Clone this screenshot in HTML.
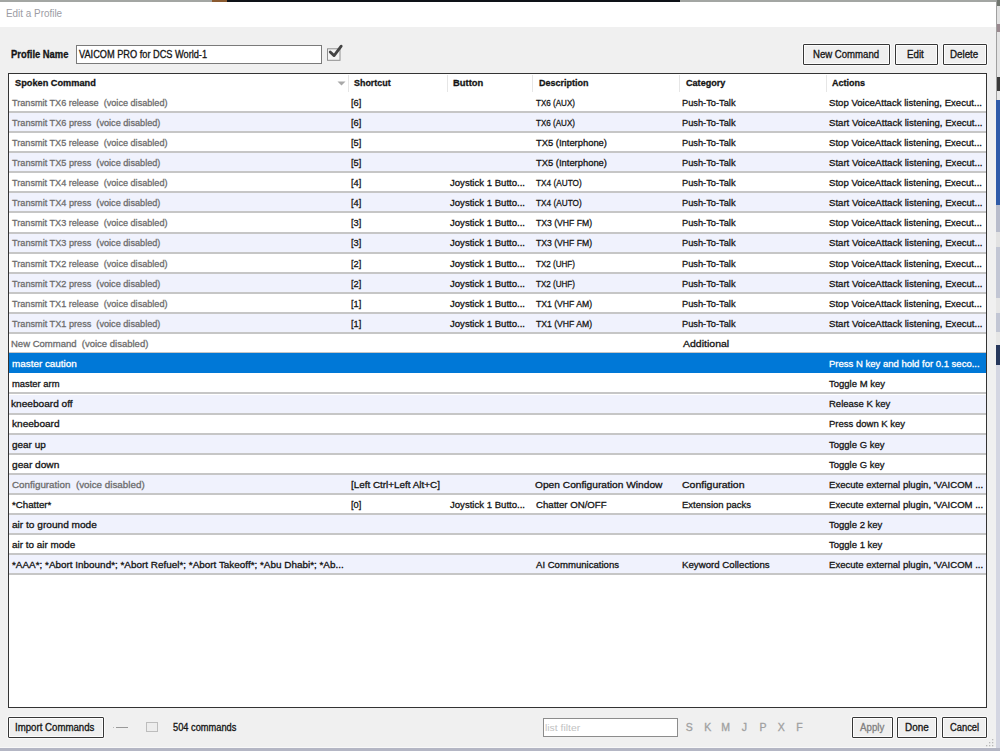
<!DOCTYPE html>
<html><head><meta charset="utf-8">
<style>
*{margin:0;padding:0;box-sizing:border-box}
html,body{width:1000px;height:751px;overflow:hidden;background:#c9cbd8;font-family:"Liberation Sans",sans-serif;font-size:10px;color:#000}
.abs{position:absolute}
.tx{position:absolute;white-space:nowrap;transform-origin:0 0;color:#141414;-webkit-text-stroke:0.3px;z-index:5}
#win{position:absolute;left:0;top:2px;width:996px;height:745px;background:#f0f0f0}
#title{position:absolute;left:0;top:0;width:996px;height:25px;background:#fff}
.btn{position:absolute;background:#efefef;border:1px solid #363636;border-radius:1px;box-shadow:inset 0 0 0 1px #fcfcfc,0 0 0 1px #fafafa}
#table{position:absolute;left:8px;top:73px;width:979px;height:635px;background:#fff;border:1px solid #333}
.hsep{position:absolute;top:75px;width:1px;height:17px;background:#e6e6e6}
.r{position:absolute;left:9px;width:977px;height:18px}
.r::after{content:"";position:absolute;left:0;right:0;top:18px;height:2px;background:#c6c6c6}
.alt{background:#f0f2fd}
.sel{background:#0078d7;margin-top:-1.6px;height:19.9px;z-index:2}
.sel::after{display:none}
</style></head><body>
<!-- desktop strips -->
<div class="abs" style="left:0;top:0;width:1000px;height:2px;background:#a3a6a3"></div>
<div class="abs" style="left:212px;top:0;width:15px;height:2px;background:#8a5a30"></div>
<div class="abs" style="left:227px;top:0;width:453px;height:2px;background:#0e1218"></div>
<div class="abs" style="left:996px;top:0px;width:4px;height:6px;background:#70756f"></div>
<div class="abs" style="left:996px;top:6px;width:4px;height:18px;background:#e2e2e2"></div>
<div class="abs" style="left:996px;top:24px;width:4px;height:8px;background:#9a8a90"></div>
<div class="abs" style="left:996px;top:32px;width:4px;height:45px;background:#e4e4e4"></div>
<div class="abs" style="left:996px;top:77px;width:4px;height:14px;background:#3a3a3a"></div>
<div class="abs" style="left:996px;top:91px;width:4px;height:9px;background:#e8e8e8"></div>
<div class="abs" style="left:996px;top:100px;width:4px;height:105px;background:#2f5ba8"></div>
<div class="abs" style="left:996px;top:205px;width:4px;height:27px;background:#b8bccb"></div>
<div class="abs" style="left:996px;top:232px;width:4px;height:15px;background:#e2e2e2"></div>
<div class="abs" style="left:996px;top:247px;width:4px;height:51px;background:#c2c6d4"></div>
<div class="abs" style="left:996px;top:298px;width:4px;height:15px;background:#e6e6e6"></div>
<div class="abs" style="left:996px;top:313px;width:4px;height:19px;background:#c2c6d4"></div>
<div class="abs" style="left:996px;top:332px;width:4px;height:13px;background:#e6e6e6"></div>
<div class="abs" style="left:996px;top:345px;width:4px;height:20px;background:#26375c"></div>
<div class="abs" style="left:996px;top:365px;width:4px;height:386px;background:#d4d6e2"></div>
<div class="abs" style="left:996px;top:0;width:1px;height:100px;background:#a0a0a0"></div>
<div class="abs" style="left:0;top:748px;width:1000px;height:3px;background:#b4b6c4"></div>
<div class="abs" style="left:0;top:747px;width:996px;height:1px;background:#f8f8f8"></div>

<div id="win">
  <div id="title"></div>
</div>
<div class="abs" style="left:76px;top:45px;width:246px;height:19px;background:#fff;border:1px solid #7a7a7a"></div>
<svg class="abs" style="left:326px;top:44px" width="18" height="18" viewBox="0 0 18 18">
  <rect x="1.5" y="4.8" width="12.5" height="11.5" fill="#f4f4f4" stroke="#8f8f8f" stroke-width="1"/>
  <path d="M4.2 8 L8.1 11.6 L15.2 2.2" fill="none" stroke="#444" stroke-width="2.8" stroke-linejoin="round" stroke-linecap="round"/>
</svg>
<div class="btn" style="left:803px;top:44px;width:87px;height:21px"></div>
<div class="btn" style="left:895px;top:44px;width:43px;height:21px"></div>
<div class="btn" style="left:943px;top:44px;width:44px;height:21px"></div>

<div id="table"></div>
<svg class="abs" style="left:337px;top:81px" width="10" height="6" viewBox="0 0 10 6"><path d="M0.5 0.5 L8.5 0.5 L4.5 4.5 Z" fill="#a8a8a8"/></svg>
<div class="hsep" style="left:348px"></div>
<div class="hsep" style="left:447px"></div>
<div class="hsep" style="left:532px"></div>
<div class="hsep" style="left:679px"></div>
<div class="hsep" style="left:826px"></div>
<div class="r" style="top:92.90px"></div>
<div class="r alt" style="top:113.01px"></div>
<div class="r" style="top:133.12px"></div>
<div class="r alt" style="top:153.23px"></div>
<div class="r" style="top:173.34px"></div>
<div class="r alt" style="top:193.45px"></div>
<div class="r" style="top:213.56px"></div>
<div class="r alt" style="top:233.67px"></div>
<div class="r" style="top:253.78px"></div>
<div class="r alt" style="top:273.89px"></div>
<div class="r" style="top:294.00px"></div>
<div class="r alt" style="top:314.11px"></div>
<div class="r" style="top:334.22px"></div>
<div class="r alt sel" style="top:354.33px"></div>
<div class="r" style="top:374.44px"></div>
<div class="r alt" style="top:394.55px"></div>
<div class="r" style="top:414.66px"></div>
<div class="r alt" style="top:434.77px"></div>
<div class="r" style="top:454.88px"></div>
<div class="r alt" style="top:474.99px"></div>
<div class="r" style="top:495.10px"></div>
<div class="r alt" style="top:515.21px"></div>
<div class="r" style="top:535.32px"></div>
<div class="r alt" style="top:555.43px"></div>
<span class="tx" style="left:12.02px;top:93.70px;font-size:9.75px;line-height:18px;transform:scaleX(0.9350);color:#6d6d6d">Transmit TX6 release&nbsp; (voice disabled)</span>
<span class="tx" style="left:350.95px;top:93.70px;font-size:9.75px;line-height:18px;transform:scaleX(0.9516)">[6]</span>
<span class="tx" style="left:535.84px;top:93.70px;font-size:9.75px;line-height:18px;transform:scaleX(0.8270)">TX6 (AUX)</span>
<span class="tx" style="left:681.86px;top:93.70px;font-size:9.75px;line-height:18px;transform:scaleX(0.9501)">Push-To-Talk</span>
<span class="tx" style="left:828.92px;top:93.70px;font-size:9.75px;line-height:18px;transform:scaleX(0.9835)">Stop VoiceAttack listening, Execut...</span>
<span class="tx" style="left:12.02px;top:113.81px;font-size:9.75px;line-height:18px;transform:scaleX(0.9379);color:#6d6d6d">Transmit TX6 press&nbsp; (voice disabled)</span>
<span class="tx" style="left:350.95px;top:113.81px;font-size:9.75px;line-height:18px;transform:scaleX(0.9516)">[6]</span>
<span class="tx" style="left:535.84px;top:113.81px;font-size:9.75px;line-height:18px;transform:scaleX(0.8270)">TX6 (AUX)</span>
<span class="tx" style="left:681.86px;top:113.81px;font-size:9.75px;line-height:18px;transform:scaleX(0.9501)">Push-To-Talk</span>
<span class="tx" style="left:828.92px;top:113.81px;font-size:9.75px;line-height:18px;transform:scaleX(0.9835)">Start VoiceAttack listening, Execut...</span>
<span class="tx" style="left:12.02px;top:133.92px;font-size:9.75px;line-height:18px;transform:scaleX(0.9350);color:#6d6d6d">Transmit TX5 release&nbsp; (voice disabled)</span>
<span class="tx" style="left:350.95px;top:133.92px;font-size:9.75px;line-height:18px;transform:scaleX(0.9516)">[5]</span>
<span class="tx" style="left:535.81px;top:133.92px;font-size:9.75px;line-height:18px;transform:scaleX(0.9626)">TX5 (Interphone)</span>
<span class="tx" style="left:681.86px;top:133.92px;font-size:9.75px;line-height:18px;transform:scaleX(0.9501)">Push-To-Talk</span>
<span class="tx" style="left:828.92px;top:133.92px;font-size:9.75px;line-height:18px;transform:scaleX(0.9835)">Stop VoiceAttack listening, Execut...</span>
<span class="tx" style="left:12.02px;top:154.03px;font-size:9.75px;line-height:18px;transform:scaleX(0.9379);color:#6d6d6d">Transmit TX5 press&nbsp; (voice disabled)</span>
<span class="tx" style="left:350.95px;top:154.03px;font-size:9.75px;line-height:18px;transform:scaleX(0.9516)">[5]</span>
<span class="tx" style="left:535.81px;top:154.03px;font-size:9.75px;line-height:18px;transform:scaleX(0.9626)">TX5 (Interphone)</span>
<span class="tx" style="left:681.86px;top:154.03px;font-size:9.75px;line-height:18px;transform:scaleX(0.9501)">Push-To-Talk</span>
<span class="tx" style="left:828.92px;top:154.03px;font-size:9.75px;line-height:18px;transform:scaleX(0.9835)">Start VoiceAttack listening, Execut...</span>
<span class="tx" style="left:12.02px;top:174.14px;font-size:9.75px;line-height:18px;transform:scaleX(0.9350);color:#6d6d6d">Transmit TX4 release&nbsp; (voice disabled)</span>
<span class="tx" style="left:350.95px;top:174.14px;font-size:9.75px;line-height:18px;transform:scaleX(0.9516)">[4]</span>
<span class="tx" style="left:449.81px;top:174.14px;font-size:9.75px;line-height:18px;transform:scaleX(0.9819)">Joystick 1 Butto...</span>
<span class="tx" style="left:535.83px;top:174.14px;font-size:9.75px;line-height:18px;transform:scaleX(0.8469)">TX4 (AUTO)</span>
<span class="tx" style="left:681.86px;top:174.14px;font-size:9.75px;line-height:18px;transform:scaleX(0.9501)">Push-To-Talk</span>
<span class="tx" style="left:828.92px;top:174.14px;font-size:9.75px;line-height:18px;transform:scaleX(0.9835)">Stop VoiceAttack listening, Execut...</span>
<span class="tx" style="left:12.02px;top:194.25px;font-size:9.75px;line-height:18px;transform:scaleX(0.9379);color:#6d6d6d">Transmit TX4 press&nbsp; (voice disabled)</span>
<span class="tx" style="left:350.95px;top:194.25px;font-size:9.75px;line-height:18px;transform:scaleX(0.9516)">[4]</span>
<span class="tx" style="left:449.81px;top:194.25px;font-size:9.75px;line-height:18px;transform:scaleX(0.9819)">Joystick 1 Butto...</span>
<span class="tx" style="left:535.83px;top:194.25px;font-size:9.75px;line-height:18px;transform:scaleX(0.8469)">TX4 (AUTO)</span>
<span class="tx" style="left:681.86px;top:194.25px;font-size:9.75px;line-height:18px;transform:scaleX(0.9501)">Push-To-Talk</span>
<span class="tx" style="left:828.92px;top:194.25px;font-size:9.75px;line-height:18px;transform:scaleX(0.9835)">Start VoiceAttack listening, Execut...</span>
<span class="tx" style="left:12.02px;top:214.36px;font-size:9.75px;line-height:18px;transform:scaleX(0.9350);color:#6d6d6d">Transmit TX3 release&nbsp; (voice disabled)</span>
<span class="tx" style="left:350.95px;top:214.36px;font-size:9.75px;line-height:18px;transform:scaleX(0.9516)">[3]</span>
<span class="tx" style="left:449.81px;top:214.36px;font-size:9.75px;line-height:18px;transform:scaleX(0.9819)">Joystick 1 Butto...</span>
<span class="tx" style="left:535.83px;top:214.36px;font-size:9.75px;line-height:18px;transform:scaleX(0.8851)">TX3 (VHF FM)</span>
<span class="tx" style="left:681.86px;top:214.36px;font-size:9.75px;line-height:18px;transform:scaleX(0.9501)">Push-To-Talk</span>
<span class="tx" style="left:828.92px;top:214.36px;font-size:9.75px;line-height:18px;transform:scaleX(0.9835)">Stop VoiceAttack listening, Execut...</span>
<span class="tx" style="left:12.02px;top:234.47px;font-size:9.75px;line-height:18px;transform:scaleX(0.9379);color:#6d6d6d">Transmit TX3 press&nbsp; (voice disabled)</span>
<span class="tx" style="left:350.95px;top:234.47px;font-size:9.75px;line-height:18px;transform:scaleX(0.9516)">[3]</span>
<span class="tx" style="left:449.81px;top:234.47px;font-size:9.75px;line-height:18px;transform:scaleX(0.9819)">Joystick 1 Butto...</span>
<span class="tx" style="left:535.83px;top:234.47px;font-size:9.75px;line-height:18px;transform:scaleX(0.8851)">TX3 (VHF FM)</span>
<span class="tx" style="left:681.86px;top:234.47px;font-size:9.75px;line-height:18px;transform:scaleX(0.9501)">Push-To-Talk</span>
<span class="tx" style="left:828.92px;top:234.47px;font-size:9.75px;line-height:18px;transform:scaleX(0.9835)">Start VoiceAttack listening, Execut...</span>
<span class="tx" style="left:12.02px;top:254.58px;font-size:9.75px;line-height:18px;transform:scaleX(0.9350);color:#6d6d6d">Transmit TX2 release&nbsp; (voice disabled)</span>
<span class="tx" style="left:350.95px;top:254.58px;font-size:9.75px;line-height:18px;transform:scaleX(0.9516)">[2]</span>
<span class="tx" style="left:449.81px;top:254.58px;font-size:9.75px;line-height:18px;transform:scaleX(0.9819)">Joystick 1 Butto...</span>
<span class="tx" style="left:535.84px;top:254.58px;font-size:9.75px;line-height:18px;transform:scaleX(0.8270)">TX2 (UHF)</span>
<span class="tx" style="left:681.86px;top:254.58px;font-size:9.75px;line-height:18px;transform:scaleX(0.9501)">Push-To-Talk</span>
<span class="tx" style="left:828.92px;top:254.58px;font-size:9.75px;line-height:18px;transform:scaleX(0.9835)">Stop VoiceAttack listening, Execut...</span>
<span class="tx" style="left:12.02px;top:274.69px;font-size:9.75px;line-height:18px;transform:scaleX(0.9379);color:#6d6d6d">Transmit TX2 press&nbsp; (voice disabled)</span>
<span class="tx" style="left:350.95px;top:274.69px;font-size:9.75px;line-height:18px;transform:scaleX(0.9516)">[2]</span>
<span class="tx" style="left:449.81px;top:274.69px;font-size:9.75px;line-height:18px;transform:scaleX(0.9819)">Joystick 1 Butto...</span>
<span class="tx" style="left:535.84px;top:274.69px;font-size:9.75px;line-height:18px;transform:scaleX(0.8270)">TX2 (UHF)</span>
<span class="tx" style="left:681.86px;top:274.69px;font-size:9.75px;line-height:18px;transform:scaleX(0.9501)">Push-To-Talk</span>
<span class="tx" style="left:828.92px;top:274.69px;font-size:9.75px;line-height:18px;transform:scaleX(0.9835)">Start VoiceAttack listening, Execut...</span>
<span class="tx" style="left:12.02px;top:294.80px;font-size:9.75px;line-height:18px;transform:scaleX(0.9350);color:#6d6d6d">Transmit TX1 release&nbsp; (voice disabled)</span>
<span class="tx" style="left:350.95px;top:294.80px;font-size:9.75px;line-height:18px;transform:scaleX(0.9516)">[1]</span>
<span class="tx" style="left:449.81px;top:294.80px;font-size:9.75px;line-height:18px;transform:scaleX(0.9819)">Joystick 1 Butto...</span>
<span class="tx" style="left:535.83px;top:294.80px;font-size:9.75px;line-height:18px;transform:scaleX(0.8851)">TX1 (VHF AM)</span>
<span class="tx" style="left:681.86px;top:294.80px;font-size:9.75px;line-height:18px;transform:scaleX(0.9501)">Push-To-Talk</span>
<span class="tx" style="left:828.92px;top:294.80px;font-size:9.75px;line-height:18px;transform:scaleX(0.9835)">Stop VoiceAttack listening, Execut...</span>
<span class="tx" style="left:12.02px;top:314.91px;font-size:9.75px;line-height:18px;transform:scaleX(0.9379);color:#6d6d6d">Transmit TX1 press&nbsp; (voice disabled)</span>
<span class="tx" style="left:350.95px;top:314.91px;font-size:9.75px;line-height:18px;transform:scaleX(0.9516)">[1]</span>
<span class="tx" style="left:449.81px;top:314.91px;font-size:9.75px;line-height:18px;transform:scaleX(0.9819)">Joystick 1 Butto...</span>
<span class="tx" style="left:535.83px;top:314.91px;font-size:9.75px;line-height:18px;transform:scaleX(0.8851)">TX1 (VHF AM)</span>
<span class="tx" style="left:681.86px;top:314.91px;font-size:9.75px;line-height:18px;transform:scaleX(0.9501)">Push-To-Talk</span>
<span class="tx" style="left:828.92px;top:314.91px;font-size:9.75px;line-height:18px;transform:scaleX(0.9835)">Start VoiceAttack listening, Execut...</span>
<span class="tx" style="left:11.44px;top:335.02px;font-size:9.75px;line-height:18px;transform:scaleX(0.9748);color:#6d6d6d">New Command&nbsp; (voice disabled)</span>
<span class="tx" style="left:682.60px;top:335.02px;font-size:9.75px;line-height:18px;transform:scaleX(1.0784)">Additional</span>
<span class="tx" style="left:11.51px;top:355.13px;font-size:9.75px;line-height:18px;transform:scaleX(1.0129);color:#fff">master caution</span>
<span class="tx" style="left:828.64px;top:355.13px;font-size:9.75px;line-height:18px;transform:scaleX(0.9752);color:#fff">Press N key and hold for 0.1 seco...</span>
<span class="tx" style="left:11.54px;top:375.24px;font-size:9.75px;line-height:18px;transform:scaleX(0.9631)">master arm</span>
<span class="tx" style="left:829.21px;top:375.24px;font-size:9.75px;line-height:18px;transform:scaleX(0.9750)">Toggle M key</span>
<span class="tx" style="left:11.49px;top:395.35px;font-size:9.75px;line-height:18px;transform:scaleX(1.0375)">kneeboard off</span>
<span class="tx" style="left:828.64px;top:395.35px;font-size:9.75px;line-height:18px;transform:scaleX(0.9750)">Release K key</span>
<span class="tx" style="left:11.50px;top:415.46px;font-size:9.75px;line-height:18px;transform:scaleX(1.0323)">kneeboard</span>
<span class="tx" style="left:828.64px;top:415.46px;font-size:9.75px;line-height:18px;transform:scaleX(0.9750)">Press down K key</span>
<span class="tx" style="left:11.80px;top:435.57px;font-size:9.75px;line-height:18px;transform:scaleX(1.0195)">gear up</span>
<span class="tx" style="left:829.21px;top:435.57px;font-size:9.75px;line-height:18px;transform:scaleX(0.9750)">Toggle G key</span>
<span class="tx" style="left:11.79px;top:455.68px;font-size:9.75px;line-height:18px;transform:scaleX(1.0391)">gear down</span>
<span class="tx" style="left:829.21px;top:455.68px;font-size:9.75px;line-height:18px;transform:scaleX(0.9750)">Toggle G key</span>
<span class="tx" style="left:11.71px;top:475.79px;font-size:9.75px;line-height:18px;transform:scaleX(1.0073);color:#6d6d6d">Configuration&nbsp; (voice disabled)</span>
<span class="tx" style="left:350.91px;top:475.79px;font-size:9.75px;line-height:18px;transform:scaleX(1.0129)">[Left Ctrl+Left Alt+C]</span>
<span class="tx" style="left:535.49px;top:475.79px;font-size:9.75px;line-height:18px;transform:scaleX(1.0454)">Open Configuration Window</span>
<span class="tx" style="left:682.07px;top:475.79px;font-size:9.75px;line-height:18px;transform:scaleX(1.0784)">Configuration</span>
<span class="tx" style="left:828.64px;top:475.79px;font-size:9.75px;line-height:18px;transform:scaleX(0.9807)">Execute external plugin, &#x27;VAICOM ...</span>
<span class="tx" style="left:12.01px;top:495.90px;font-size:9.75px;line-height:18px;transform:scaleX(0.9950)">*Chatter*</span>
<span class="tx" style="left:350.95px;top:495.90px;font-size:9.75px;line-height:18px;transform:scaleX(0.9516)">[0]</span>
<span class="tx" style="left:449.81px;top:495.90px;font-size:9.75px;line-height:18px;transform:scaleX(0.9819)">Joystick 1 Butto...</span>
<span class="tx" style="left:535.52px;top:495.90px;font-size:9.75px;line-height:18px;transform:scaleX(0.9874)">Chatter ON/OFF</span>
<span class="tx" style="left:681.84px;top:495.90px;font-size:9.75px;line-height:18px;transform:scaleX(0.9713)">Extension packs</span>
<span class="tx" style="left:828.64px;top:495.90px;font-size:9.75px;line-height:18px;transform:scaleX(0.9807)">Execute external plugin, &#x27;VAICOM ...</span>
<span class="tx" style="left:11.80px;top:516.01px;font-size:9.75px;line-height:18px;transform:scaleX(1.0367)">air to ground mode</span>
<span class="tx" style="left:829.21px;top:516.01px;font-size:9.75px;line-height:18px;transform:scaleX(0.9750)">Toggle 2 key</span>
<span class="tx" style="left:11.80px;top:536.12px;font-size:9.75px;line-height:18px;transform:scaleX(1.0159)">air to air mode</span>
<span class="tx" style="left:829.21px;top:536.12px;font-size:9.75px;line-height:18px;transform:scaleX(0.9750)">Toggle 1 key</span>
<span class="tx" style="left:12.00px;top:556.23px;font-size:9.75px;line-height:18px;transform:scaleX(1.0161)">*AAA*; *Abort Inbound*; *Abort Refuel*; *Abort Takeoff*; *Abu Dhabi*; *Ab...</span>
<span class="tx" style="left:536.00px;top:556.23px;font-size:9.75px;line-height:18px;transform:scaleX(0.9817)">AI Communications</span>
<span class="tx" style="left:681.83px;top:556.23px;font-size:9.75px;line-height:18px;transform:scaleX(0.9924)">Keyword Collections</span>
<span class="tx" style="left:828.64px;top:556.23px;font-size:9.75px;line-height:18px;transform:scaleX(0.9807)">Execute external plugin, &#x27;VAICOM ...</span>

<div class="btn" style="left:8px;top:717px;width:96px;height:21px"></div>
<div class="abs" style="left:113px;top:727px;width:1px;height:1px;background:#bbb"></div>
<div class="abs" style="left:116px;top:727px;width:12px;height:1px;background:#999"></div>
<div class="abs" style="left:146px;top:722px;width:12px;height:10px;background:#ededed;border:1px solid #bdbdbd"></div>
<div class="abs" style="left:543px;top:718px;width:135px;height:19px;background:#fff;border:1px solid #8c8c8c"></div>
<div class="btn" style="left:852px;top:717px;width:41px;height:21px"></div>
<div class="btn" style="left:897px;top:717px;width:40px;height:21px"></div>
<div class="btn" style="left:942px;top:717px;width:45px;height:21px"></div>
<span class="tx" style="left:5.61px;top:5.30px;font-size:10.50px;line-height:16px;transform:scaleX(0.9421);color:#9c9ca4;-webkit-text-stroke:0">Edit a Profile</span>
<span class="tx" style="left:10.94px;top:46.50px;font-size:10.00px;line-height:16px;transform:scaleX(0.9384);font-weight:bold">Profile Name</span>
<span class="tx" style="left:79.20px;top:46.50px;font-size:10.00px;line-height:16px;transform:scaleX(0.9206)">VAICOM PRO for DCS World-1</span>
<span class="tx" style="left:812.63px;top:47.00px;font-size:10.00px;line-height:16px;transform:scaleX(0.9585)">New Command</span>
<span class="tx" style="left:907.22px;top:47.00px;font-size:10.00px;line-height:16px;transform:scaleX(0.9756)">Edit</span>
<span class="tx" style="left:950.22px;top:47.00px;font-size:10.00px;line-height:16px;transform:scaleX(0.9783)">Delete</span>
<span class="tx" style="left:14.72px;top:73.80px;font-size:9.75px;line-height:18px;transform:scaleX(0.9442);font-weight:bold">Spoken Command</span>
<span class="tx" style="left:354.33px;top:73.80px;font-size:9.75px;line-height:18px;transform:scaleX(0.9148);font-weight:bold">Shortcut</span>
<span class="tx" style="left:453.34px;top:73.80px;font-size:9.75px;line-height:18px;transform:scaleX(0.9626);font-weight:bold">Button</span>
<span class="tx" style="left:538.97px;top:73.80px;font-size:9.75px;line-height:18px;transform:scaleX(0.9244);font-weight:bold">Description</span>
<span class="tx" style="left:685.64px;top:73.80px;font-size:9.75px;line-height:18px;transform:scaleX(0.9324);font-weight:bold">Category</span>
<span class="tx" style="left:832.32px;top:73.80px;font-size:9.75px;line-height:18px;transform:scaleX(0.9234);font-weight:bold">Actions</span>
<span class="tx" style="left:15.13px;top:719.50px;font-size:10.00px;line-height:16px;transform:scaleX(0.9654)">Import Commands</span>
<span class="tx" style="left:172.63px;top:719.50px;font-size:10.00px;line-height:16px;transform:scaleX(0.9261)">504 commands</span>
<span class="tx" style="left:545.47px;top:720.00px;font-size:9.50px;line-height:16px;transform:scaleX(1.0940);color:#c2c2c2;-webkit-text-stroke:0">list filter</span>
<span class="tx" style="left:685.68px;top:718.50px;font-size:10.50px;line-height:16px;transform:scaleX(1.0000);color:#a0a0a0">S</span>
<span class="tx" style="left:704.16px;top:718.50px;font-size:10.50px;line-height:16px;transform:scaleX(1.0000);color:#a0a0a0">K</span>
<span class="tx" style="left:721.16px;top:718.50px;font-size:10.50px;line-height:16px;transform:scaleX(1.0000);color:#a0a0a0">M</span>
<span class="tx" style="left:741.79px;top:718.50px;font-size:10.50px;line-height:16px;transform:scaleX(1.0000);color:#a0a0a0">J</span>
<span class="tx" style="left:759.56px;top:718.50px;font-size:10.50px;line-height:16px;transform:scaleX(1.0000);color:#a0a0a0">P</span>
<span class="tx" style="left:777.79px;top:718.50px;font-size:10.50px;line-height:16px;transform:scaleX(1.0000);color:#a0a0a0">X</span>
<span class="tx" style="left:796.16px;top:718.50px;font-size:10.50px;line-height:16px;transform:scaleX(1.0000);color:#a0a0a0">F</span>
<span class="tx" style="left:860.00px;top:719.50px;font-size:10.00px;line-height:16px;transform:scaleX(0.9720);color:#7f7f7f">Apply</span>
<span class="tx" style="left:905.21px;top:719.50px;font-size:10.00px;line-height:16px;transform:scaleX(0.9912)">Done</span>
<span class="tx" style="left:949.53px;top:719.50px;font-size:10.00px;line-height:16px;transform:scaleX(0.9367)">Cancel</span>
<svg class="abs" style="left:984px;top:738px" width="12" height="10" viewBox="0 0 12 10"><g fill="#b8b8b8"><rect x="8" y="1" width="1.3" height="1.3"/><rect x="5" y="4" width="1.3" height="1.3"/><rect x="8" y="4" width="1.3" height="1.3"/><rect x="2" y="7" width="1.3" height="1.3"/><rect x="5" y="7" width="1.3" height="1.3"/><rect x="8" y="7" width="1.3" height="1.3"/></g></svg>

</body></html>
